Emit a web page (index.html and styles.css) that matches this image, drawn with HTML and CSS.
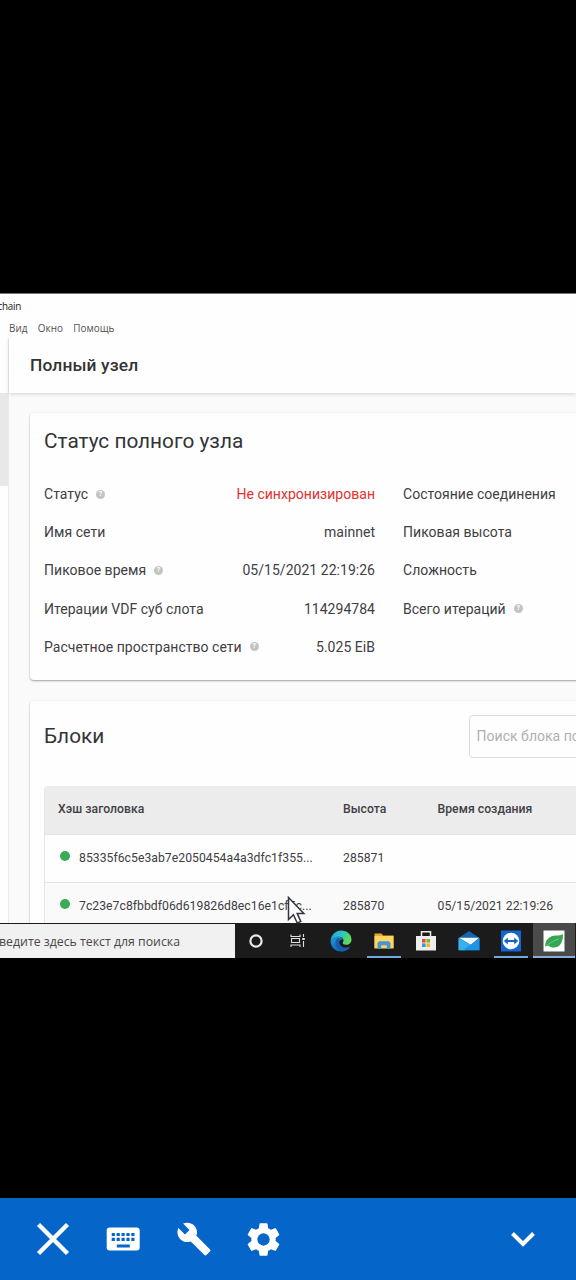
FILE: index.html
```
<!DOCTYPE html>
<html lang="ru">
<head>
    <meta charset="UTF-8">
    <meta name="viewport" content="width=device-width, initial-scale=1.0">
    <title>Chia Blockchain</title>
    <link rel="stylesheet" href="styles.css">
</head>
<body>

    <div class="desktop">
        <div class="titlebar"><span>Chia Blockchain</span></div>
        <div class="menubar"><span>Вид</span><span>Окно</span><span>Помощь</span></div>

        <div class="app">
            <div class="sidebar"><div class="sidebar-active"></div></div>
            <div class="main">
                <div class="page-header">Полный узел</div>

                <div class="card status-card">
                    <h2>Статус полного узла</h2>
                    <div class="status-grid">
                        <div class="status-col">
                            <div class="row"><span>Статус</span><i class="help">?</i><b class="value red">Не синхронизирован</b></div>
                            <div class="row"><span>Имя сети</span><b class="value">mainnet</b></div>
                            <div class="row"><span>Пиковое время</span><i class="help">?</i><b class="value">05/15/2021 22:19:26</b></div>
                            <div class="row"><span>Итерации VDF суб слота</span><b class="value">114294784</b></div>
                            <div class="row"><span>Расчетное пространство сети</span><i class="help">?</i><b class="value">5.025 EiB</b></div>
                        </div>
                        <div class="status-col">
                            <div class="row"><span>Состояние соединения</span></div>
                            <div class="row"><span>Пиковая высота</span></div>
                            <div class="row"><span>Сложность</span></div>
                            <div class="row"><span>Всего итераций</span><i class="help">?</i></div>
                        </div>
                    </div>
                </div>

                <div class="card blocks-card">
                    <div class="blocks-top">
                        <h2>Блоки</h2>
                        <div class="search">Поиск блока по хэшу заголовка</div>
                    </div>
                    <div class="table">
                        <div class="tr th"><span>Хэш заголовка</span><span>Высота</span><span>Время создания</span></div>
                        <div class="tr"><span class="hash"><i class="dot"></i>85335f6c5e3ab7e2050454a4a3dfc1f355...</span><span>285871</span><span></span></div>
                        <div class="tr even"><span class="hash"><i class="dot"></i>7c23e7c8fbbdf06d619826d8ec16e1cf5c...</span><span>285870</span><span>05/15/2021 22:19:26</span></div>
                    </div>
                </div>
            </div>
        </div>

        <div class="taskbar">
            <div class="task-search"><span>Введите здесь текст для поиска</span></div>
            <div class="task">
                <svg width="22" height="22" viewBox="0 0 22 22"><circle cx="11" cy="11" r="5.6" fill="none" stroke="#e8e8e8" stroke-width="2.2"/></svg>
            </div>
            <div class="task">
                <svg width="22" height="22" viewBox="0 0 22 22" fill="none" stroke="#e0e0e0" stroke-width="1.1"><path d="M4 4.5v2h9v-2M4 17v-2h9v2M4.5 8.5h8v4h-8zM16.5 4v3M16.5 11v6"/><path d="M15.2 9h2.6" stroke-width="2"/></svg>
            </div>
            <div class="task">
                <svg width="22" height="22" viewBox="0 0 22 22">
                    <defs>
                        <linearGradient id="edgeTop" x1="0" y1="0" x2="1" y2="0.4"><stop offset="0" stop-color="#1ba0dc"/><stop offset="0.5" stop-color="#2cc3c8"/><stop offset="1" stop-color="#5fdb58"/></linearGradient>
                        <linearGradient id="edgeLow" x1="0" y1="0" x2="0.6" y2="1"><stop offset="0" stop-color="#1e9be2"/><stop offset="1" stop-color="#1260ad"/></linearGradient>
                    </defs>
                    <path d="M.6 11C1 4.700 5.500.5 11.200.5 17.200.5 21.500 4.800 21.500 9.500c0 3.300-2.400 5.300-5.200 5.300-2.600 0-4.100-.9-3.500-2 1.900-3.200-.3-6-4-6C4.700 6.800 1.800 8.700.6 11z" fill="url(#edgeTop)"/>
                    <path d="M.6 11C1.600 8 4.800 6.500 8.200 6.700c2.500.1 4.600 1.500 4.900 3.300-1.400-1-3.700-.4-4 2.200-.3 3 3.200 6.200 7.600 5.600 1.500-.2 2.400-.8 3.300-1.200C18 20 14.700 21.600 11.200 21.500 5 21.400.5 16.900.6 11z" fill="url(#edgeLow)"/>
                    <path d="M7 8.500c-3.300 4.800-1 11 4.200 13 3.700.1 6.800-1.700 8.600-4.600-4.300 2.300-10.200.4-10.700-4.400-.1-1.600.8-2.700 2-3C10.200 8.400 8.500 7.900 7 8.500z" fill="#155fae"/>
                </svg>
            </div>
            <div class="task open">
                <svg width="22" height="22" viewBox="0 0 22 22"><path d="M1.500 3.500h7l1.500 2h10.500V18h-19z" fill="#e9a92c"/><path d="M1.500 6h19v12.500h-19z" fill="#fcd462"/><path d="M4.500 19v-6l1.700-1.700h9.600l1.700 1.700v6h-3.700v-3.800H8.200V19z" fill="#4a92d6"/></svg>
            </div>
            <div class="task">
                <svg width="22" height="22" viewBox="0 0 22 22"><path d="M6.500 7V1.700h9V7" fill="none" stroke="#eee" stroke-width="1.500"/><path d="M1 6h20v14.500H1z" fill="#eee"/><path d="M7 9h3.600v3.600H7z" fill="#e8502c"/><path d="M11.400 9H15v3.600h-3.600z" fill="#7db72f"/><path d="M7 13.400h3.600V17H7z" fill="#2b9de0"/><path d="M11.400 13.400H15V17h-3.600z" fill="#f6b820"/></svg>
            </div>
            <div class="task">
                <svg width="22" height="22" viewBox="0 0 22 22"><path d="M.5 8 11 1l10.500 7v12.300H.5z" fill="#1264b0"/><path d="M1 7.800h20l-8 7.200z" fill="#f4f8fb"/><path d="M.5 8 13 15l-6 5.300H.5z" fill="#37b0f0"/><path d="M21.500 8v12.300H5z" fill="#1e94e2"/></svg>
            </div>
            <div class="task open">
                <svg width="22" height="22" viewBox="0 0 22 22"><path d="M1 .5h20v21H1z" fill="#1266cf"/><circle cx="11" cy="11" r="8.300" fill="#fff"/><path d="m3.800 11 4-3.500v2.400h6.400V7.500l4 3.500-4 3.500v-2.400H7.800v2.400z" fill="#1266cf"/></svg>
            </div>
            <div class="task active">
                <svg width="22" height="22" viewBox="0 0 22 22"><path d="M.5.5h21v21H.5z" fill="#fff"/><path d="M2 16.500C2.500 9.500 6.500 5.500 13 5.500c2.700 0 5-.3 7-1.200 0 5.700-1.500 12.500-8.500 13.200-3 .3-4.500-.7-5.700-1.500C4.500 15.500 3 16 2 16.500z" fill="#35a652"/><path d="M3.500 15.700C7.500 12.500 11 10.500 16 8.800" fill="none" stroke="#b7e2c1" stroke-width=".5"/></svg>
            </div>
        </div>

        <svg class="cursor" width="20" height="30" viewBox="0 0 20 30"><path d="M1.500 1.500v22l5-4.800L10.200 27l3.600-1.600-3.600-8h6.600z" fill="#fff" stroke="#333640" stroke-width="1.500"/></svg>
    </div>

    <div class="toolbar">
        <svg width="36" height="36" viewBox="0 0 36 36"><path d="M3.500 3.500l29 29M32.500 3.500l-29 29" stroke="#fff" stroke-width="4.400" fill="none"/></svg>
        <svg width="36" height="36" viewBox="0 0 36 36">
            <rect x="1.700" y="6.500" width="33" height="23" rx="3" fill="#fff"/>
            <path d="M6.700 13.500h24M6.700 18.400h24" stroke="#0565c9" stroke-width="3.100" stroke-dasharray="3.200 1.700"/>
            <path d="M11.800 25h13" stroke="#0565c9" stroke-width="3"/>
        </svg>
        <svg class="wrench" width="36" height="36" viewBox="0 0 24 24" fill="#fff"><path d="M22.700 19l-9.100-9.100c.9-2.300.4-5-1.500-6.900-2-2-5-2.400-7.400-1.300L9 6 6 9 1.600 4.700C.4 7.100.9 10.100 2.900 12.100c1.900 1.900 4.600 2.400 6.900 1.500l9.100 9.100c.4.4 1 .4 1.400 0l2.300-2.300c.5-.4.5-1.100.1-1.400z"/></svg>
        <svg class="gear" width="39" height="39" viewBox="0 0 24 24" fill="#fff"><path d="M19.430 12.980c.04-.32.07-.64.07-.98s-.03-.66-.07-.98l2.110-1.650c.19-.15.24-.42.12-.64l-2-3.460c-.12-.22-.39-.3-.61-.22l-2.490 1c-.52-.4-1.080-.73-1.690-.98l-.38-2.650C14.460 2.180 14.250 2 14 2h-4c-.25 0-.46.18-.49.42l-.38 2.650c-.61.25-1.170.59-1.690.98l-2.490-1c-.23-.09-.49 0-.61.22l-2 3.460c-.13.22-.07.49.12.64l2.110 1.650c-.04.32-.07.65-.07.98s.03.66.07.98l-2.110 1.650c-.19.15-.24.42-.12.64l2 3.460c.12.22.39.3.61.22l2.490-1c.52.4 1.080.73 1.690.98l.38 2.650c.03.24.24.42.49.42h4c.25 0 .46-.18.49-.42l.38-2.650c.61-.25 1.170-.59 1.690-.98l2.490 1c.23.09.49 0 .61-.22l2-3.460c.12-.22.07-.49-.12-.64z"/><circle cx="12" cy="12" r="3.800" fill="#0565c9"/></svg>
        <svg class="collapse" width="26" height="18" viewBox="0 0 26 18"><path d="M2.500 3.500L13 14 23.500 3.500" stroke="#fff" stroke-width="4" fill="none"/></svg>
    </div>

</body>
</html>
```
FILE: styles.css
```
* { margin: 0; padding: 0; box-sizing: border-box; }
body {
    background: #000; width: 576px; height: 1280px; overflow: hidden;
    display: flex; flex-direction: column; justify-content: space-between;
    font-family: Roboto, "Noto Sans", sans-serif; color: #3f4044;
}
i, b { font-style: normal; font-weight: normal; }
svg { display: block; flex: none; }

.desktop {
    position: relative; margin-top: 293px; height: 665px; overflow: hidden;
    display: flex; flex-direction: column; background: #fefefe; border-top: 1px solid #777;
}
.titlebar, .menubar { font-family: "Open Sans", "Noto Sans", sans-serif; font-size: 9.9px; flex: none; }
.titlebar {
    width: 21px; height: 25px; line-height: 25px; color: #222; letter-spacing: -.25px;
    display: flex; justify-content: flex-end; white-space: nowrap;
}
.menubar { height: 19px; line-height: 19px; padding-left: 9px; display: flex; gap: 10.500px; color: #505050; }

.app { flex: 1; min-height: 0; display: flex; overflow: hidden; }
.sidebar { width: 9px; flex: none; padding-top: 55px; border-right: 1px solid #ececec; background: #fefefe; }
.sidebar-active { height: 93px; background: #e8e8e8; }
.main { flex: 1; min-width: 0; background: #fafafa; }
.page-header {
    height: 55px; line-height: 55px; padding-left: 21px; background: #fefefe;
    font-size: 17.4px; font-weight: 500; letter-spacing: .13px; color: #333;
    box-shadow: 0 1px 4px rgba(0, 0, 0, 0.16);
}
.card {
    width: 700px; margin: 20px 0 0 21px; padding: 0 14px; background: #fefefe;
    border-radius: 4px; box-shadow: 0 1px 2px rgba(0, 0, 0, 0.36);
}
h2 { font-size: 20.8px; font-weight: 400; color: #333437; line-height: 56px; }

.status-card { height: 267px; }
.status-grid { display: flex; gap: 28px; padding-top: 6px; }
.status-col { width: 331px; flex: none; }
.row { height: 38.2px; display: flex; align-items: center; font-size: 14px; letter-spacing: .03px; white-space: nowrap; }
.value { margin-left: auto; }
.red { color: #e3302f; }
.help {
    width: 9px; height: 9px; margin-left: 8px; border-radius: 50%; background: #c3c3c3;
    color: #fff; font-size: 7px; font-weight: 700; line-height: 9px; text-align: center; letter-spacing: 0;
}

.blocks-card { height: 400px; margin-top: 21px; }
.blocks-top { display: flex; height: 85px; padding-top: 14px; }
.blocks-top h2 { width: 424.500px; line-height: 43px; }
.search {
    width: 240px; height: 43px; line-height: 41px; padding-left: 7px; border: 1px solid #dcdcdc;
    border-radius: 4px; font-size: 14px; letter-spacing: .03px; color: #b0b0b0; white-space: nowrap;
}
.table { border-left: 1px solid #e6e6e6; border-radius: 4px 0 0 0; overflow: hidden; }
.tr {
    height: 48px; display: grid; grid-template-columns: 285px 94.500px 1fr; align-items: center;
    padding: 0 0 2px 13px; border-bottom: 1px solid #e4e4e4; font-size: 12.2px; letter-spacing: .04px; white-space: nowrap;
}
.tr.th { height: 49px; background: #ececec; font-weight: 500; }
.tr.even { background: #fafafa; }
.hash { display: flex; align-items: center; }
.dot { width: 10px; height: 10px; margin: -3px 9px 0 2px; border-radius: 50%; background: #3aac59; }

.taskbar { height: 35px; flex: none; display: flex; background: #1b1b1b; }
.task-search {
    width: 234.500px; flex: none; margin-top: 1px; background: #f1f1f1; color: #484848; overflow: hidden;
    font: 12.3px/35px "Open Sans", "Noto Sans", sans-serif; white-space: nowrap;
    display: flex; justify-content: flex-end; padding-right: 54.500px;
}
.task { width: 42.600px; flex: none; display: flex; align-items: center; justify-content: center; }
.task.open { background: linear-gradient(#74a9dd, #74a9dd) center bottom / 34px 2px no-repeat; }
.task.active { background: #4a4a4a; border-bottom: 2px solid #84b0dc; padding-top: 2px; }

.cursor { position: absolute; left: 287px; top: 602px; }

.toolbar { height: 82px; flex: none; display: flex; align-items: center; padding: 0 40px 0 35px; gap: 34px; background: #0565c9; }
.wrench { margin-left: 1px; }
.gear { margin-left: -2px; }
.collapse { margin-left: auto; }
```
